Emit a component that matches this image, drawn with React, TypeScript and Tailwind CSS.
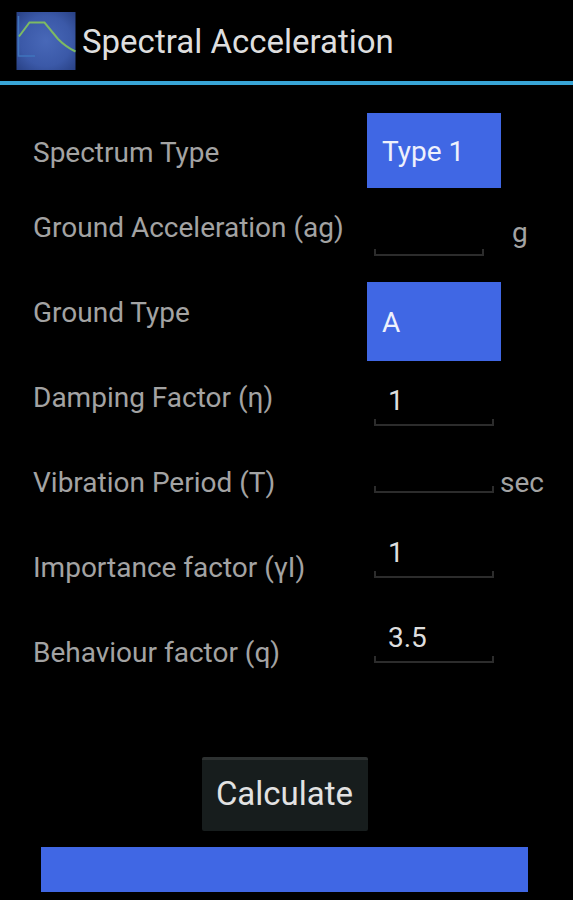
import { useId } from 'react';
import type { ReactNode } from 'react';

const groundTypes = ['A', 'B', 'C', 'D', 'E'];
const spectrumTypes = ['Type 1', 'Type 2'];

function SpectrumIcon() {
  return (
    <svg viewBox="0 0 60 60" className="w-[60px] h-[60px] shrink-0" aria-hidden="true">
      <defs>
        <radialGradient id="iconBg" cx="50%" cy="50%" r="72%">
          <stop offset="0" stopColor="#4868b8" />
          <stop offset="0.6" stopColor="#3b59a8" />
          <stop offset="1" stopColor="#273f82" />
        </radialGradient>
      </defs>
      <rect x="0.5" y="0" width="59" height="58" fill="url(#iconBg)" />
      <path d="M2.5 4V44H19" fill="none" stroke="#3f74bd" strokeWidth="1.5" />
      <path d="M3 24.5L13.5 10.5H28.5L42 27C47 32 52 36 59.5 39.5" fill="none" stroke="#7dba63" strokeWidth="2" />
    </svg>
  );
}

function Row({ id, label, children }: { id: string; label: string; children: ReactNode }) {
  return (
    <div className="flex items-start h-[85px]">
      <label htmlFor={id} className="flex-1 mt-[15px] text-[28px] leading-8 whitespace-nowrap text-[#a3a3a3]">
        {label}
      </label>
      <div className="w-[178px] shrink-0 flex">{children}</div>
    </div>
  );
}

function Field({ id, value, size }: { id: string; value?: string; size: string }) {
  return (
    <div className={`ml-[7px] shrink-0 ${size}`}>
      <input
        id={id}
        type="text"
        inputMode="decimal"
        defaultValue={value}
        className="block w-full h-[34px] px-[14px] pb-1 bg-transparent text-[28px] leading-[30px] text-[#dedede] outline-none"
      />
      <div className="h-[7px] border-2 border-t-0 border-[#2c2c2c]" />
    </div>
  );
}

function Picker({ id, options, size }: { id: string; options: string[]; size: string }) {
  return (
    <select
      id={id}
      className={`appearance-none w-[134px] px-[15px] pt-[3px] bg-[#4067e4] text-[28px] leading-8 text-[#eef1fc] outline-none ${size}`}
    >
      {options.map((option) => (
        <option key={option}>{option}</option>
      ))}
    </select>
  );
}

export default function App() {
  const id = useId();

  return (
    <div className="min-h-screen bg-black font-['Roboto',sans-serif]">
      <header className="flex items-center gap-[6px] h-[85px] pt-[2px] pl-4 border-b-4 border-[#38a5d6]">
        <SpectrumIcon />
        <h1 className="text-[33px] leading-10 whitespace-nowrap text-[#dedede]">Spectral Acceleration</h1>
      </header>

      <form>
        <div className="pt-7 pl-[33px] pr-7">
          <div className="flex items-start h-[84px]">
            <label htmlFor={`${id}-spectrum`} className="flex-1 mt-6 text-[28px] leading-8 whitespace-nowrap text-[#a3a3a3]">
              Spectrum Type
            </label>
            <div className="w-[178px] shrink-0 flex">
              <Picker id={`${id}-spectrum`} options={spectrumTypes} size="h-[75px]" />
            </div>
          </div>

          <Row id={`${id}-ag`} label="Ground Acceleration (ag)">
            <Field id={`${id}-ag`} size="w-[110px] mt-[18px]" />
            <span className="ml-[28px] mt-5 text-[28px] leading-8 text-[#a3a3a3]">g</span>
          </Row>
          <Row id={`${id}-ground`} label="Ground Type">
            <Picker id={`${id}-ground`} options={groundTypes} size="h-[79px]" />
          </Row>
          <Row id={`${id}-damping`} label="Damping Factor (η)">
            <Field id={`${id}-damping`} value="1" size="w-[120px] mt-[18px]" />
          </Row>
          <Row id={`${id}-period`} label="Vibration Period (T)">
            <Field id={`${id}-period`} size="w-[120px]" />
            <span className="ml-[6px] mt-[15px] text-[28px] leading-8 text-[#a3a3a3]">sec</span>
          </Row>
          <Row id={`${id}-importance`} label="Importance factor (γI)">
            <Field id={`${id}-importance`} value="1" size="w-[120px]" />
          </Row>
          <Row id={`${id}-behaviour`} label="Behaviour factor (q)">
            <Field id={`${id}-behaviour`} value="3.5" size="w-[120px]" />
          </Row>
        </div>

        <div className="flex flex-col items-center gap-4 mt-[50px] pl-[41px] pr-[45px]">
          <button
            type="button"
            className="h-[74px] w-[166px] pb-1 rounded-xs border-t-3 border-[#2d3131] bg-[#171d1d] text-[33px] leading-10 text-[#e2e2e2]"
          >
            Calculate
          </button>
          <output className="block w-full h-[45px] bg-[#4067e4]" />
        </div>
      </form>
    </div>
  );
}
